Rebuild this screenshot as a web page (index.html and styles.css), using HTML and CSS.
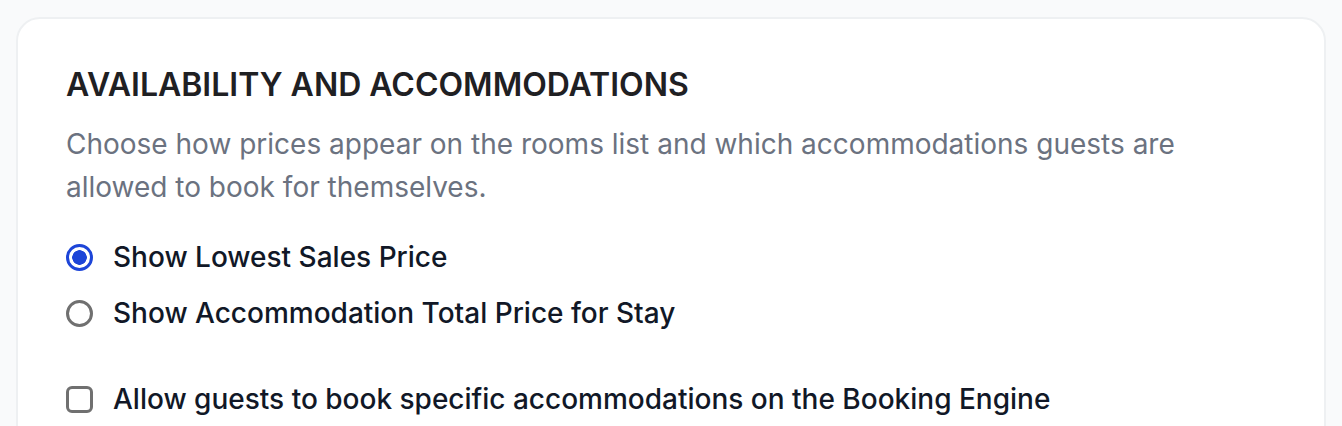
FILE: index.html
```html
<!DOCTYPE html>
<html lang="en">
<head>
  <meta charset="UTF-8">
  <meta name="viewport" content="width=device-width, initial-scale=1">
  <title>Availability and Accommodations</title>
  <link rel="stylesheet" href="styles.css">
</head>
<body>

  <!-- TARJETA DE AJUSTES -->
  <section class="card">
    <h2 class="card-title">AVAILABILITY AND ACCOMMODATIONS</h2>
    <p class="card-desc">Choose how prices appear on the rooms list and which accommodations guests are allowed to book for themselves.</p>

    <div class="options">
      <label class="option">
        <input type="radio" name="price" checked>
        <span>Show Lowest Sales Price</span>
      </label>
      <label class="option">
        <input type="radio" name="price">
        <span>Show Accommodation Total Price for Stay</span>
      </label>
    </div>

    <label class="option option-check">
      <input type="checkbox">
      <span>Allow guests to book specific accommodations on the Booking Engine</span>
    </label>
  </section>

</body>
</html>
```

FILE: styles.css
```css
/* RESET Y GENERALES */
* { box-sizing: border-box; margin: 0; padding: 0; }
body {
  font-family: Inter, "Noto Sans", sans-serif;
  background: #f9fafb;
  padding: 17px 16px;
}

/* TARJETA */
.card {
  background: #fff;
  border: 2px solid #eef0f2;
  border-radius: 24px;
  padding: 46px 48px;
  min-height: 500px;
}
.card-title {
  font-size: 32px; line-height: 40px;
  font-weight: 600; color: #1f2023;
}
.card-desc {
  margin-top: 18px;
  font-size: 28px; line-height: 43px;
  color: #6b7280;
  max-width: 1140px;
}

/* OPCIONES */
.options { margin-top: 28px; display: flex; flex-direction: column; gap: 16px; }
.option {
  display: flex; align-items: center; gap: 20px;
  font-size: 28px; line-height: 40px;
  font-weight: 500; color: #111827;
  cursor: pointer;
}
.option-check { margin-top: 46px; }

.option input {
  appearance: none; -webkit-appearance: none;
  width: 27px; height: 27px; flex: none;
  border: 3px solid #707070; background: #fff;
  margin: 0;
}
.option input[type="radio"] { border-radius: 50%; }
.option input[type="radio"]:checked {
  border-color: #1d45d8;
  background: radial-gradient(circle, #1d45d8 0 7px, #fff 7.5px);
}
.option input[type="checkbox"] { border-radius: 6px; }
```
